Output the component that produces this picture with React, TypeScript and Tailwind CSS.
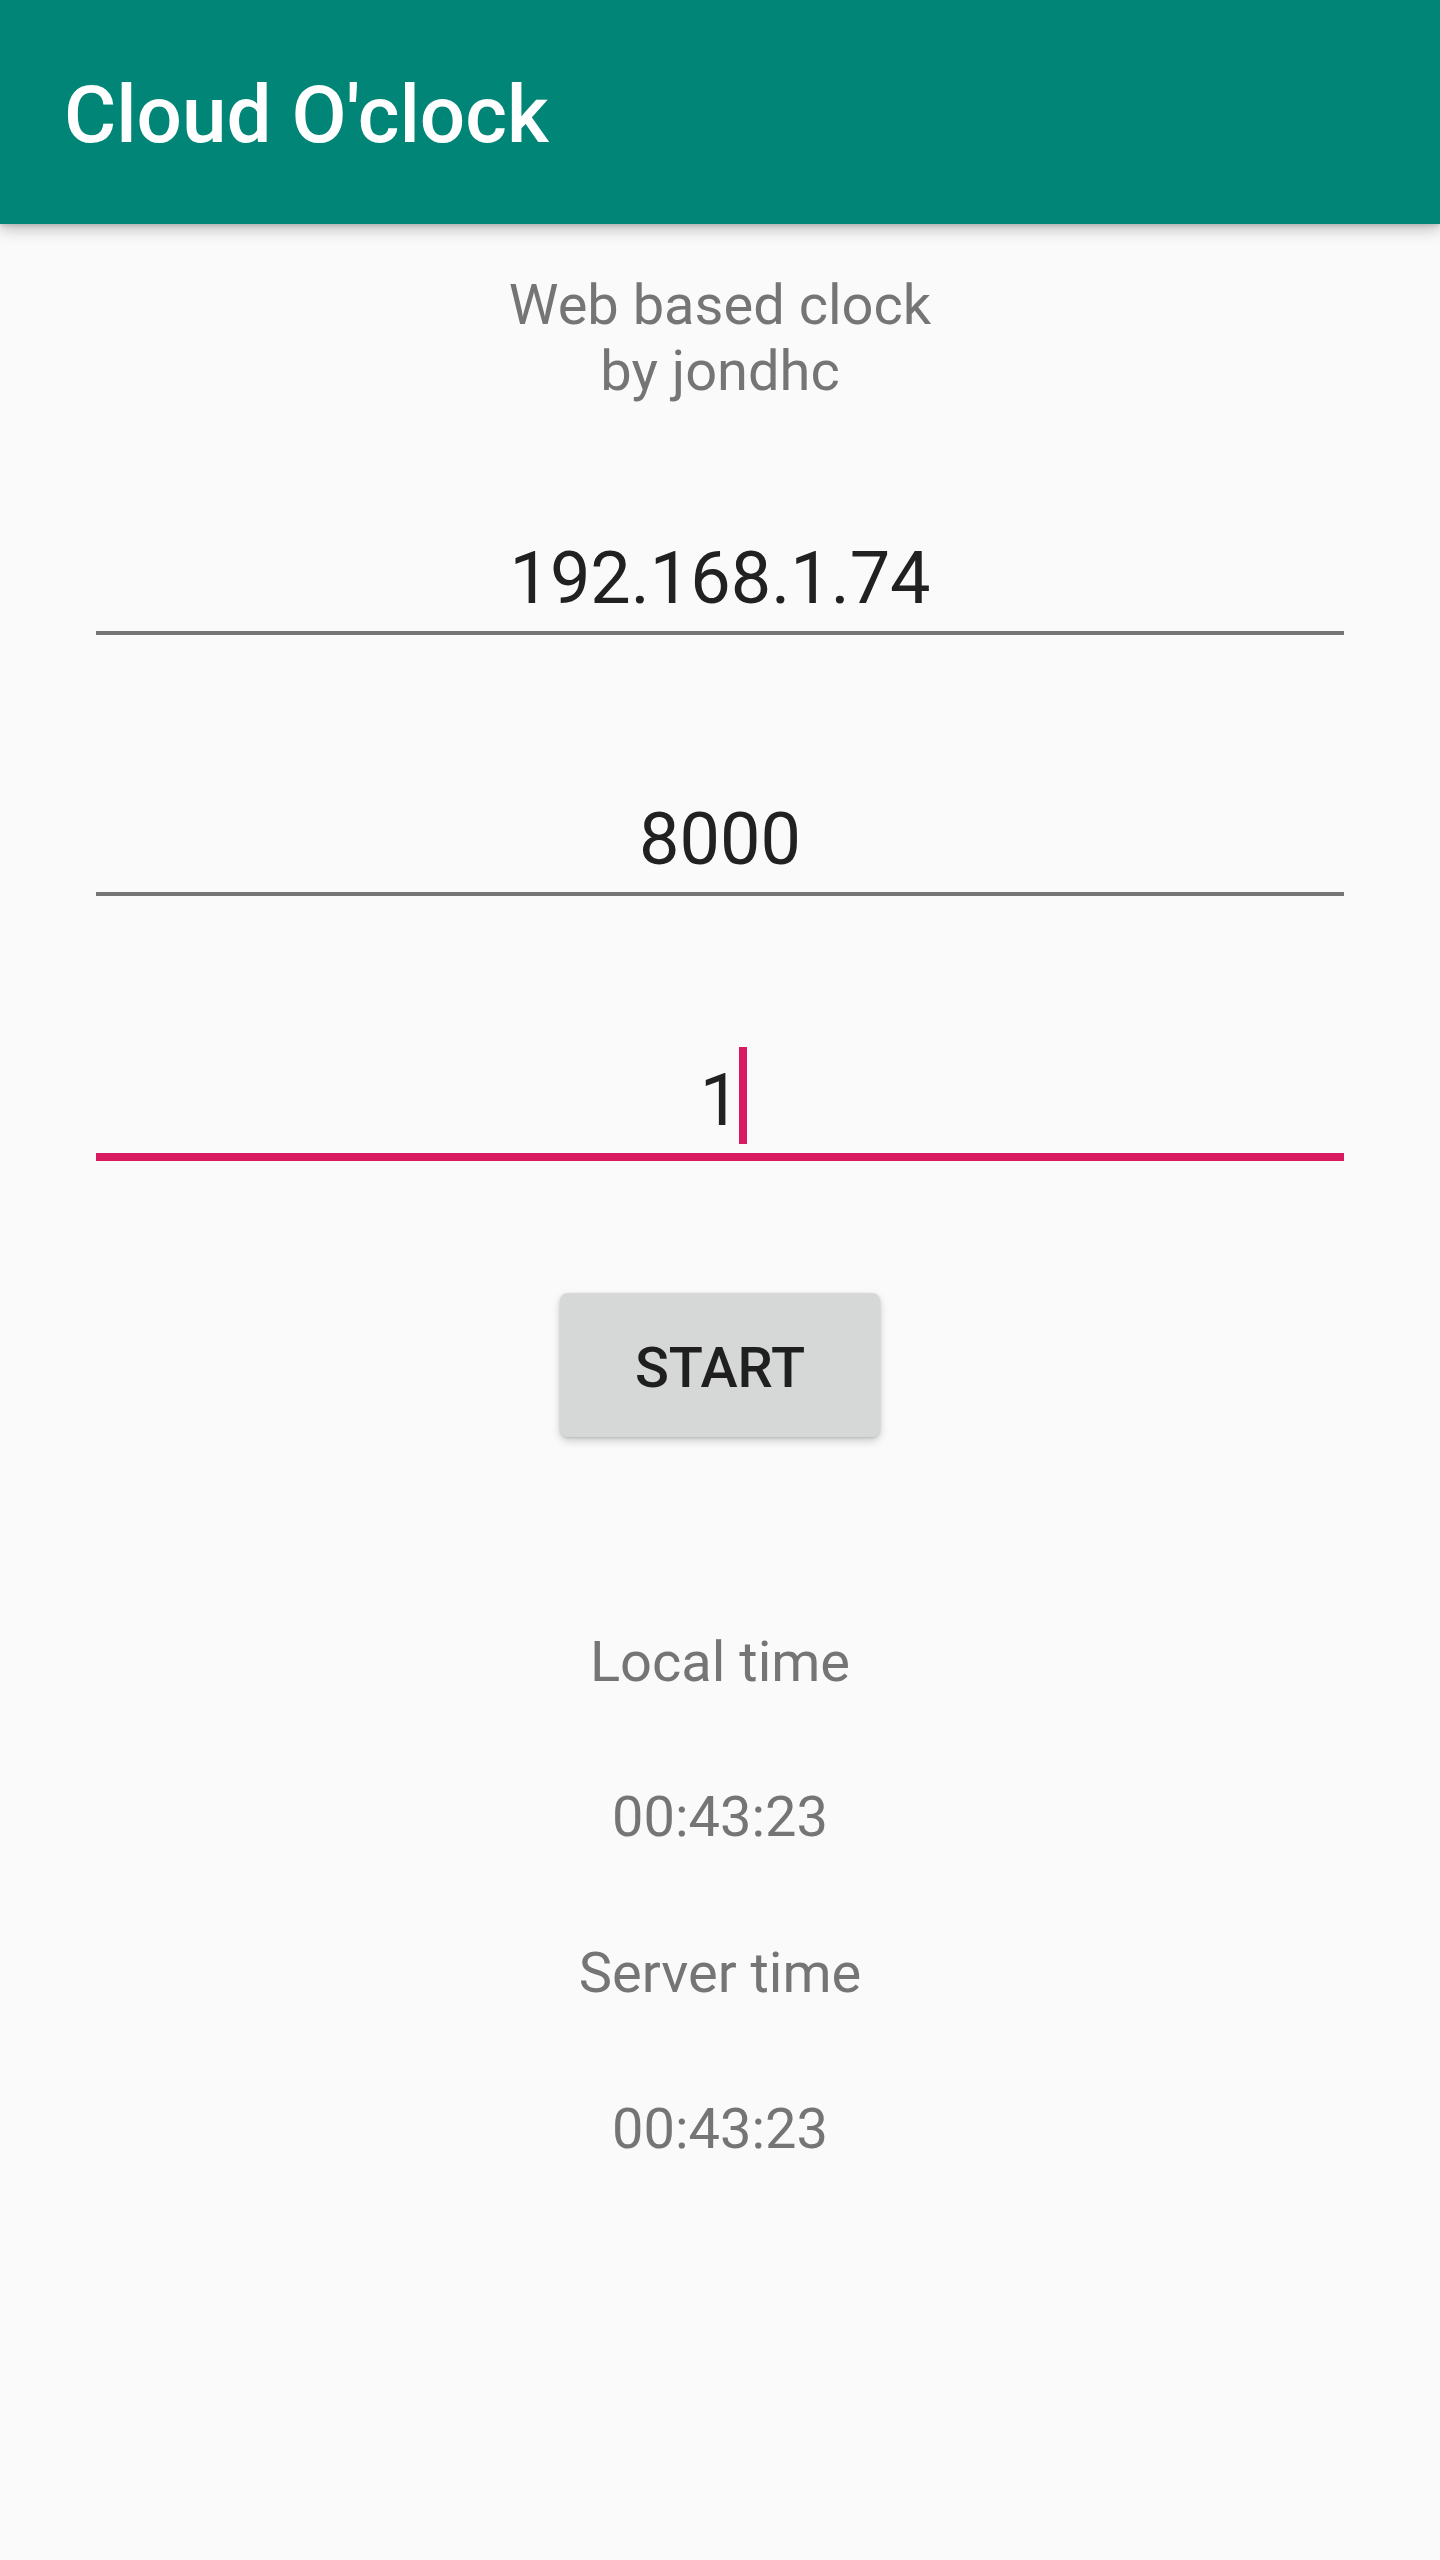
export default function App() {
  return (
    <div
      className="min-h-[2560px] w-[1440px] bg-[#fafafa]"
      style={{ fontFamily: "Roboto, 'Noto Sans', sans-serif" }}
    >
      {/* toolbar */}
      <header className="relative z-10 h-[224px] bg-[#008577] pl-[64px] pt-[68px] shadow-[0_6px_14px_rgba(0,0,0,0.22),0_2px_4px_rgba(0,0,0,0.12)]">
        <h1 className="text-[80px] font-medium leading-[94px] text-white">Cloud O'clock</h1>
      </header>

      <main className="flex flex-col items-center">
        <p className="mt-[48px] text-center text-[56px] leading-[66px] text-[#757575]">
          Web based clock
          <br />
          by jondhc
        </p>

        {/* host */}
        <div className="mt-[133px] w-[1248px]">
          <div className="text-center text-[72px] leading-[84px] text-[#212121]">192.168.1.74</div>
          <div className="mt-[10px] h-[4px] bg-[#757575]" />
        </div>

        {/* port */}
        <div className="mt-[163px] w-[1248px]">
          <div className="text-center text-[72px] leading-[84px] text-[#212121]">8000</div>
          <div className="mt-[10px] h-[4px] bg-[#757575]" />
        </div>

        {/* interval, focused */}
        <div className="mt-[163px] w-[1248px]">
          <div className="text-center text-[72px] leading-[84px] text-[#212121]">
            <span className="relative">
              1
              <span className="absolute left-[calc(100%-1px)] top-[-11px] h-[97px] w-[8px] bg-[#d81b60]" />
            </span>
          </div>
          <div className="mt-[10px] h-[8px] bg-[#d81b60]" />
        </div>

        <button className="mt-[132px] flex h-[144px] w-[320px] items-center justify-center rounded-[8px] bg-[#d6d7d7] pt-[5px] text-[56px] font-medium leading-[66px] text-[#1f1f1f] shadow-[0_4px_8px_rgba(0,0,0,0.18),0_1px_3px_rgba(0,0,0,0.14)]">
          START
        </button>

        <div className="mt-[192px] text-[56px] leading-[66px] text-[#757575]">Local time</div>
        <div className="mt-[89px] text-[56px] leading-[66px] text-[#757575]">00:43:23</div>
        <div className="mt-[90px] text-[56px] leading-[66px] text-[#757575]">Server time</div>
        <div className="mt-[90px] text-[56px] leading-[66px] text-[#757575]">00:43:23</div>
      </main>
    </div>
  );
}
